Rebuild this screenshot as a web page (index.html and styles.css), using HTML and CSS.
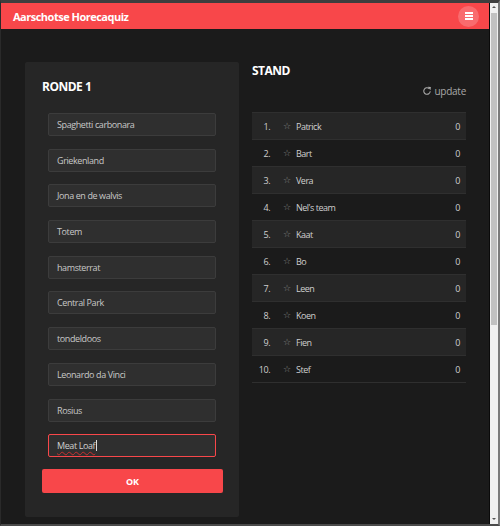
FILE: index.html
```html
<!DOCTYPE html>
<html>
<head>
<meta charset="utf-8">
<link rel="stylesheet" href="styles.css">
</head>
<body>
<div class="window">
  <div class="viewport">
    <header class="topbar">
      <span class="brand">Aarschotse Horecaquiz</span>
      <button class="menu-btn"><span></span><span></span><span></span></button>
    </header>
    <main class="content">
      <section class="card">
        <h2 class="card-title">RONDE 1</h2>
        <div class="answers">
          <div class="field">Spaghetti carbonara</div>
          <div class="field">Griekenland</div>
          <div class="field">Jona en de walvis</div>
          <div class="field">Totem</div>
          <div class="field">hamsterrat</div>
          <div class="field">Central Park</div>
          <div class="field">tondeldoos</div>
          <div class="field">Leonardo da Vinci</div>
          <div class="field">Rosius</div>
          <div class="field active"><span class="typo">Meat Loaf</span><span class="caret"></span></div>
        </div>
        <button class="ok-btn">OK</button>
      </section>
      <section class="stand">
        <h2 class="stand-title">STAND</h2>
        <div class="update-row">
          <span class="update">
            <svg class="refresh" viewBox="0 0 16 16" width="10" height="10"><path d="M13.2 8.5a5.2 5.2 0 1 1-1.7-4.3" fill="none" stroke="#aaa" stroke-width="1.7"/><path d="M9.2 1.2 L14.2 1.6 L13.6 6.6 Z" fill="#aaa"/></svg>update
          </span>
        </div>
        <div class="table">
          <div class="row odd"><span class="pos">1.</span><span class="star">☆</span><span class="name">Patrick</span><span class="score">0</span></div>
          <div class="row"><span class="pos">2.</span><span class="star">☆</span><span class="name">Bart</span><span class="score">0</span></div>
          <div class="row odd"><span class="pos">3.</span><span class="star">☆</span><span class="name">Vera</span><span class="score">0</span></div>
          <div class="row"><span class="pos">4.</span><span class="star">☆</span><span class="name">Nel's team</span><span class="score">0</span></div>
          <div class="row odd"><span class="pos">5.</span><span class="star">☆</span><span class="name">Kaat</span><span class="score">0</span></div>
          <div class="row"><span class="pos">6.</span><span class="star">☆</span><span class="name">Bo</span><span class="score">0</span></div>
          <div class="row odd"><span class="pos">7.</span><span class="star">☆</span><span class="name">Leen</span><span class="score">0</span></div>
          <div class="row"><span class="pos">8.</span><span class="star">☆</span><span class="name">Koen</span><span class="score">0</span></div>
          <div class="row odd"><span class="pos">9.</span><span class="star">☆</span><span class="name">Fien</span><span class="score">0</span></div>
          <div class="row"><span class="pos">10.</span><span class="star">☆</span><span class="name">Stef</span><span class="score">0</span></div>
        </div>
      </section>
    </main>
  </div>
  <div class="scrollbar">
    <div class="arrow up"></div>
    <div class="track"><div class="thumb"></div></div>
    <div class="arrow down"></div>
  </div>
</div>
</body>
</html>
```
FILE: styles.css
```css
* { box-sizing: border-box; }
html, body { margin: 0; padding: 0; }
body {
  width: 500px;
  height: 526px;
  overflow: hidden;
  font-family: "Open Sans", "Liberation Sans", sans-serif;
  background: #1b1b1b;
}
.window {
  width: 500px;
  height: 526px;
  display: flex;
  border-top: 3px solid #3e3e3e;
  border-right: 2px solid #7a7a7a;
  border-bottom: 2px solid #4a4a4a;
  border-left: 1px solid #2a2a2a;
}
.viewport {
  flex: 1;
  background: #1b1b1b;
  display: flex;
  flex-direction: column;
  overflow: hidden;
}
.topbar {
  height: 26px;
  flex: none;
  background: #f8474a;
  display: flex;
  align-items: center;
  justify-content: space-between;
  padding: 0 10px 0 12px;
}
.brand {
  color: #fff;
  font-weight: 700;
  font-size: 11px;
  letter-spacing: -0.5px;
}
.menu-btn {
  width: 21px;
  height: 21px;
  border-radius: 50%;
  border: none;
  padding: 0;
  background: rgba(255,255,255,0.2);
  display: flex;
  flex-direction: column;
  align-items: center;
  justify-content: center;
  gap: 1.5px;
}
.menu-btn span {
  display: block;
  width: 8px;
  height: 1.5px;
  background: #fff;
}
.content {
  display: flex;
  gap: 13px;
  padding: 33px 23px 0 24px;
  align-items: flex-start;
}
.card {
  width: 214px;
  background: #262626;
  border-radius: 2px;
  padding: 17px 16px 24px 17px;
}
.card-title, .stand-title {
  margin: 0;
  color: #fff;
  font-size: 12px;
  letter-spacing: -0.5px;
  line-height: 16px;
  font-weight: 700;
}
.card-title { margin-bottom: 18px; }
.answers {
  display: flex;
  flex-direction: column;
  gap: 12.7px;
  padding: 0 7px 0 6px;
}
.field {
  height: 23px;
  background: #2f2f2f;
  border: 1px solid #3c3c3c;
  border-radius: 2px;
  color: #c8c8c8;
  font-size: 9px;
  letter-spacing: -0.4px;
  line-height: 21px;
  padding: 0 8px;
  display: flex;
  align-items: center;
}
.field.active {
  border-color: #f8474a;
  color: #d0d0d0;
}
.typo {
  text-decoration: underline wavy #c83030;
  text-decoration-thickness: 1px;
  text-underline-offset: 2px;
}
.caret {
  display: inline-block;
  width: 1px;
  height: 11px;
  background: #ddd;
  margin-left: 1px;
}
.ok-btn {
  display: block;
  width: 100%;
  height: 24px;
  margin-top: 12px;
  border: none;
  border-radius: 2px;
  background: #f8474a;
  color: #fff;
  font-family: inherit;
  font-weight: 700;
  font-size: 9px;
}
.stand {
  width: 214px;
  padding-top: 1px;
}
.update-row {
  display: flex;
  justify-content: flex-end;
  margin-top: 4px;
  height: 16px;
  margin-bottom: 13px;
}
.update {
  color: #a8a8a8;
  font-size: 10px;
  letter-spacing: -0.25px;
  line-height: 16px;
  display: flex;
  align-items: center;
  gap: 2px;
}
.table {
  border-bottom: 1px solid #2f2f2f;
}
.row {
  height: 27px;
  border-top: 1px solid #2f2f2f;
  display: flex;
  align-items: center;
  color: #cfcfcf;
  font-size: 9px;
  letter-spacing: -0.5px;
  padding-right: 6px;
}
.row.odd { background: #262626; }
.pos {
  width: 18px;
  text-align: right;
}
.star {
  width: 12px;
  margin-left: 13px;
  color: #8a8a8a;
  font-size: 9px;
  font-family: "DejaVu Sans", sans-serif;
}
.name {
  flex: 1;
  margin-left: 1px;
}
.score { text-align: right; }
.scrollbar {
  width: 9px;
  flex: none;
  border-left: 1px solid #0a0a0a;
  background: #f0f0f0;
  display: flex;
  flex-direction: column;
}
.arrow {
  height: 9px;
  flex: none;
  position: relative;
}
.arrow::after {
  content: "";
  position: absolute;
  left: 2px;
  width: 0;
  height: 0;
  border-left: 2px solid transparent;
  border-right: 2px solid transparent;
}
.arrow.up::after { top: 3px; border-bottom: 2px solid #555; }
.arrow.down::after { top: 3px; border-top: 2px solid #555; }
.track {
  flex: 1;
  padding: 1px 1px 0 1px;
}
.thumb {
  height: 312px;
  background: #c1c1c1;
}
```
